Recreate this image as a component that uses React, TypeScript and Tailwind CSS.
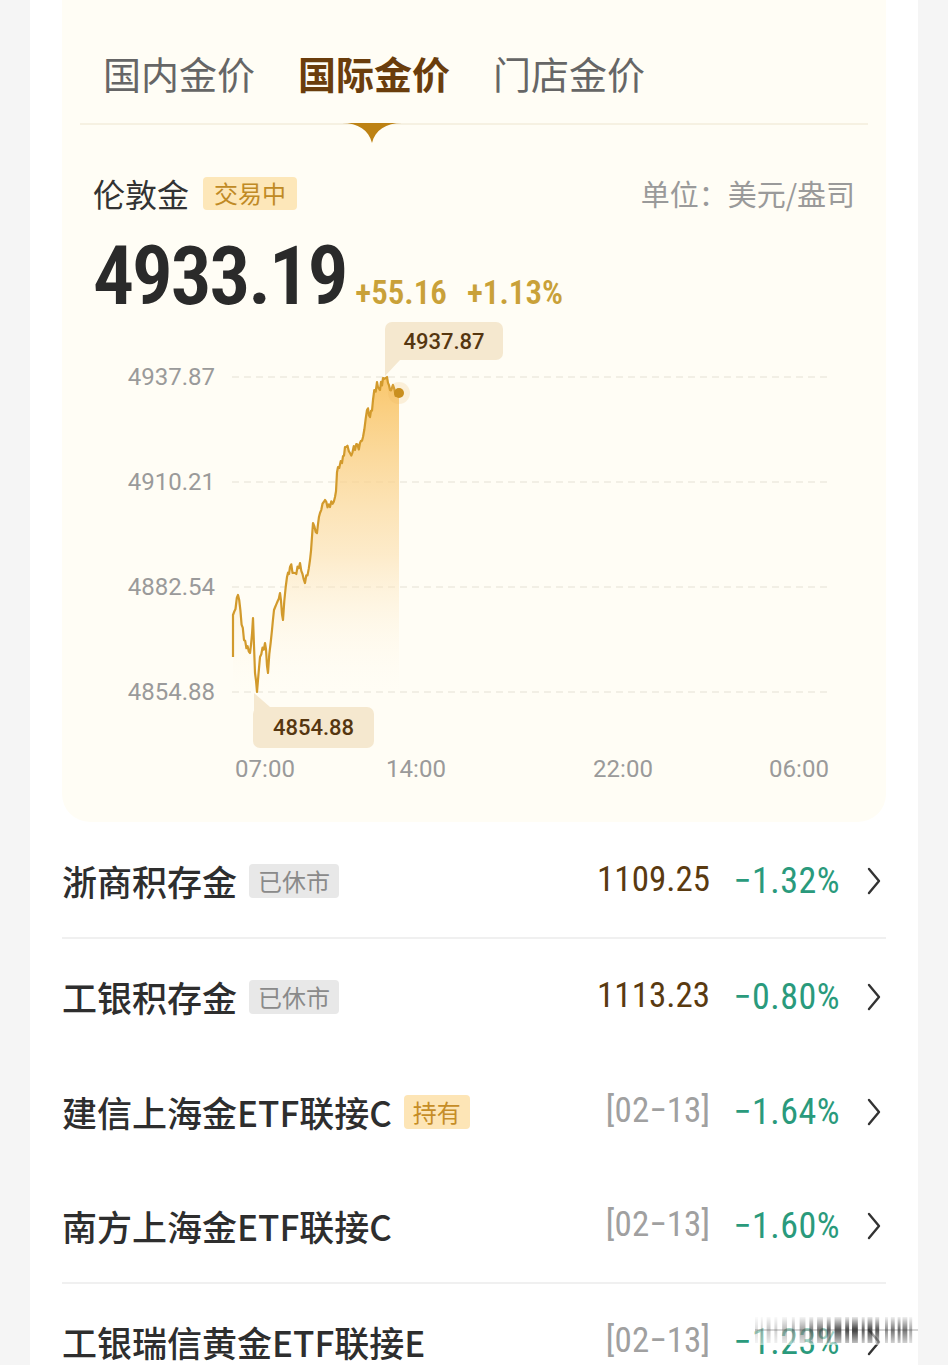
import React from 'react';

const KEY: [number, number][] = [
  [233, 657], [233, 615], [238, 595], [244, 640], [250, 653], [253, 618], [255, 673],
  [257, 692], [260, 657], [265, 643], [268, 673], [272, 630], [274, 610], [280, 593],
  [283, 620], [287, 577], [290, 567], [295, 573], [300, 563], [305, 583], [310, 560],
  [313, 523], [317, 533], [320, 513], [325, 500], [330, 507], [335, 497], [338, 467],
  [342, 463], [345, 447], [350, 453], [355, 450], [360, 443], [363, 437], [367, 410],
  [370, 417], [373, 400], [377, 382], [380, 390], [383, 378], [387, 377], [390, 390],
  [393, 385], [397, 395], [399, 393],
];

function buildSeries() {
  let seed = 11;
  const rand = () => {
    seed = (seed * 9301 + 49297) % 233280;
    return seed / 233280;
  };
  const pts: [number, number][] = [];
  for (let i = 0; i < KEY.length - 1; i++) {
    const [x0, y0] = KEY[i];
    const [x1, y1] = KEY[i + 1];
    const steps = Math.max(1, Math.round((x1 - x0) / 1.2));
    for (let s = 0; s < steps; s++) {
      const t = s / steps;
      let y = y0 + (y1 - y0) * t;
      if (s > 0) y += (rand() - 0.5) * 10;
      y = Math.min(692, Math.max(377, y));
      pts.push([x0 + (x1 - x0) * t, y]);
    }
  }
  pts.push(KEY[KEY.length - 1]);
  return pts;
}

const series = buildSeries();
const linePath = series.map(([x, y], i) => `${i ? 'L' : 'M'}${x.toFixed(1)},${y.toFixed(1)}`).join(' ');
const areaPath = `${linePath} L399,700 L233,700 Z`;

const NUM = "font-['Liberation_Sans_Narrow','Roboto_Condensed',Roboto,sans-serif]";

function Chart() {
  const grid = [377, 482, 587, 692];
  const labels = ['4937.87', '4910.21', '4882.54', '4854.88'];
  const times: [string, number][] = [['07:00', 265], ['14:00', 416], ['22:00', 623], ['06:00', 799]];
  return (
    <svg width="826" height="504" viewBox="62 318 826 504" className="block font-['Roboto',sans-serif]">
      <defs>
        <linearGradient id="gold" gradientUnits="userSpaceOnUse" x1="0" y1="377" x2="0" y2="700">
          <stop offset="0" stopColor="#f9c465" stopOpacity="0.95" />
          <stop offset="0.55" stopColor="#fbdca6" stopOpacity="0.55" />
          <stop offset="1" stopColor="#fffdf5" stopOpacity="0" />
        </linearGradient>
      </defs>
      {grid.map((y, i) => (
        <g key={y}>
          <line x1="232" x2="830" y1={y} y2={y} stroke="#eeeadf" strokeWidth="1.5" strokeDasharray="7 5" />
          <text x="215" y={y + 8} textAnchor="end" fontSize="24" fill="#9a9a9a">{labels[i]}</text>
        </g>
      ))}
      {times.map(([t, x]) => (
        <text key={t} x={x} y="777" textAnchor="middle" fontSize="24" fill="#9a9a9a">{t}</text>
      ))}
      <path d={areaPath} fill="url(#gold)" />
      <path d={linePath} fill="none" stroke="#d29a2c" strokeWidth="2.2" strokeLinejoin="round" />
      <circle cx="399" cy="393" r="11" fill="#e7b45a" fillOpacity="0.18" />
      <circle cx="399" cy="393" r="5" fill="#c98f1f" />

      <polygon points="385,352 400,360 385,376" fill="#f5e8cf" />
      <rect x="385" y="322" width="118" height="38" rx="7" fill="#f5e8cf" />
      <text x="444" y="349" textAnchor="middle" fontSize="22" fontWeight="500" fill="#553610">4937.87</text>

      <polygon points="254,693 270,707 254,716" fill="#f5e8cf" />
      <rect x="253" y="707" width="121" height="41" rx="7" fill="#f5e8cf" />
      <text x="313.5" y="735" textAnchor="middle" fontSize="22" fontWeight="500" fill="#553610">4854.88</text>
    </svg>
  );
}

function Chevron() {
  return (
    <svg width="16" height="30" viewBox="0 0 16 30" className="shrink-0">
      <path d="M3 3 L13 15 L3 27" fill="none" stroke="#333" strokeWidth="2.4" strokeLinecap="round" strokeLinejoin="round" />
    </svg>
  );
}

type Row = {
  name: string;
  badge?: { text: string; kind: 'closed' | 'hold' };
  value: string;
  isDate?: boolean;
  pct: string;
  divider?: boolean;
};

const rows: Row[] = [
  { name: '浙商积存金', badge: { text: '已休市', kind: 'closed' }, value: '1109.25', pct: '−1.32%', divider: true },
  { name: '工银积存金', badge: { text: '已休市', kind: 'closed' }, value: '1113.23', pct: '−0.80%' },
  { name: '建信上海金ETF联接C', badge: { text: '持有', kind: 'hold' }, value: '[02−13]', isDate: true, pct: '−1.64%' },
  { name: '南方上海金ETF联接C', value: '[02−13]', isDate: true, pct: '−1.60%', divider: true },
  { name: '工银瑞信黄金ETF联接E', value: '[02−13]', isDate: true, pct: '−1.23%' },
];

function Watermark() {
  const bars = [
    [0, 3, 0.15], [6, 2, 0.2], [12, 4, 0.25], [20, 3, 0.2], [28, 5, 0.3], [38, 3, 0.35], [46, 6, 0.4],
    [56, 4, 0.55], [64, 6, 0.6], [74, 4, 0.7], [82, 7, 0.75], [93, 4, 0.8], [100, 6, 0.85], [110, 3, 0.7],
    [116, 5, 0.8], [124, 4, 0.75], [134, 3, 0.5], [140, 4, 0.6], [147, 3, 0.65], [152, 5, 0.6], [159, 3, 0.4],
  ];
  return (
    <svg width="163" height="30" viewBox="0 0 168 30" preserveAspectRatio="none" className="absolute right-[30px] bottom-[20px]">
      <defs>
        <linearGradient id="wm" x1="0" y1="0" x2="0" y2="1">
          <stop offset="0" stopColor="#000" stopOpacity="0.1" />
          <stop offset="0.5" stopColor="#000" stopOpacity="0.9" />
          <stop offset="1" stopColor="#000" stopOpacity="0.3" />
        </linearGradient>
      </defs>
      <rect x="0" y="0" width="168" height="30" fill="#fff" fillOpacity="0.55" />
      {bars.map(([x, w, o], i) => (
        <rect key={i} x={x} y="2" width={w} height="26" fill="url(#wm)" opacity={o} />
      ))}
      <line x1="0" x2="168" y1="15" y2="15" stroke="#555" strokeOpacity="0.5" strokeWidth="1" />
    </svg>
  );
}

export default function App() {
  return (
    <div className="relative h-[1365px] overflow-hidden bg-[#f5f5f5] px-[30px] font-['Noto_Sans_CJK_SC',sans-serif]">
      <div className="h-full bg-white px-[32px]">
        <div className="rounded-b-[28px] bg-[#fffdf5]">
          <div className="relative">
            <div className="flex gap-[43px] pl-[41px] pt-[54px] pb-[31px] text-[38px] leading-[38px]">
              <span className="text-[#666]">国内金价</span>
              <span className="font-bold text-[#6a3d0c]">国际金价</span>
              <span className="text-[#666]">门店金价</span>
            </div>
            <div className="mx-[18px] h-[2px] bg-[#f6f1e2]" />
            <svg width="60" height="21" viewBox="0 0 60 21" className="absolute left-[280px] top-[123px]">
              <path d="M0 0 H60 C44 0 33 7 30 20 C27 7 16 0 0 0 Z" fill="#bd8214" />
            </svg>
          </div>

          <div className="mt-[51px] flex items-center justify-between px-[31px]">
            <div className="flex items-center gap-[14px]">
              <span className="text-[32px] leading-[34px] text-[#333]">伦敦金</span>
              <span className="flex h-[33px] items-center rounded-[4px] bg-[#fde7b9] px-[11px] text-[24px] text-[#c08a25]">交易中</span>
            </div>
            <span className="text-[29px] leading-[34px] text-[#9a9a9a]">单位：美元/盎司</span>
          </div>

          <div className={`mt-[24px] flex h-[84px] items-baseline pl-[31px] ${NUM}`}>
            <span className="text-[82px] leading-[84px] font-semibold tracking-[-2.5px] text-[#2a2a2a]">4933.19</span>
            <span className="ml-[9px] text-[33px] font-semibold text-[#c9a139]">+55.16</span>
            <span className="ml-[20px] text-[33px] font-semibold text-[#c9a139]">+1.13%</span>
          </div>

          <Chart />
        </div>

        <div className="mt-[2px]">
          {rows.map((r) => (
            <div
              key={r.name}
              className={`flex h-[115px] items-center justify-between pr-[4px] ${r.divider ? 'border-b-2 border-[#f0f0f0]' : ''}`}
            >
              <div className="flex items-center gap-[12px]">
                <span className="text-[35px] font-medium leading-[40px] text-[#2e2e2e]">{r.name}</span>
                {r.badge && (
                  <span
                    className={`flex h-[34px] items-center rounded-[4px] px-[9px] text-[24px] ${
                      r.badge.kind === 'closed' ? 'bg-[#e8e8e8] text-[#8a8a8a]' : 'bg-[#fde5b6] text-[#c68d27]'
                    }`}
                  >
                    {r.badge.text}
                  </span>
                )}
              </div>
              <div className={`flex items-center ${NUM}`}>
                <span className={`text-[35px] ${r.isDate ? 'text-[#a0a0a0]' : 'text-[#5a3a10]'}`}>{r.value}</span>
                <span className="ml-[18px] w-[112px] text-right text-[36px] tracking-[0.5px] text-[#2a9a7c]">{r.pct}</span>
                <span className="ml-[26px]">
                  <Chevron />
                </span>
              </div>
            </div>
          ))}
        </div>
      </div>
      <Watermark />
    </div>
  );
}
